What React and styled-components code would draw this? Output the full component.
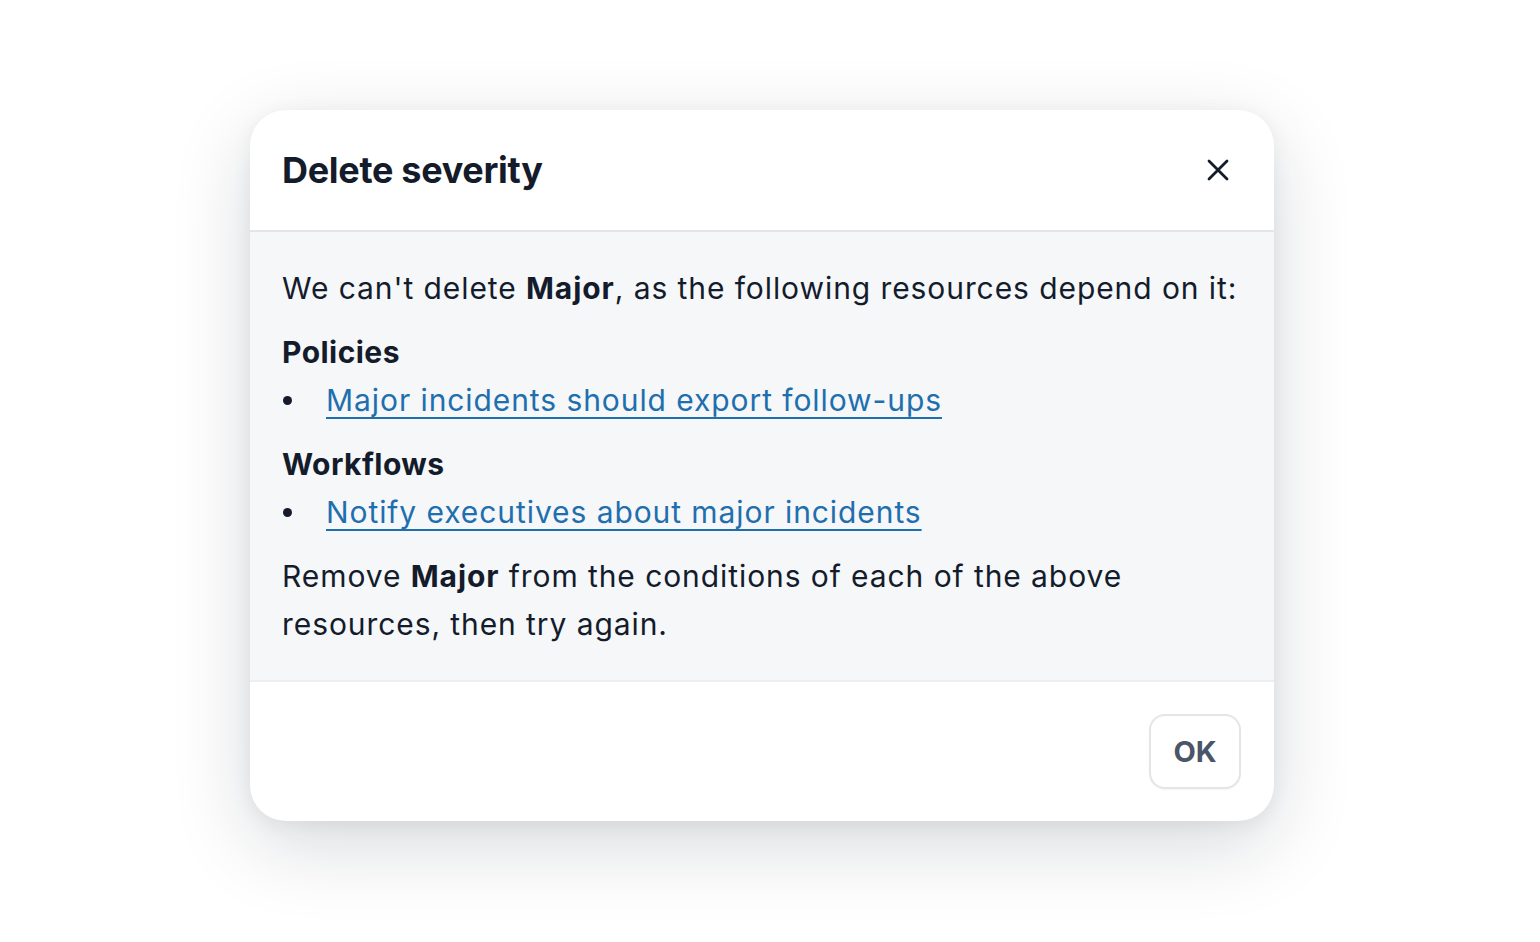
import React from "react";
import styled, { createGlobalStyle } from "styled-components";

const GlobalStyle = createGlobalStyle`
  html, body {
    margin: 0;
    padding: 0;
    background: #ffffff;
    font-family: Inter, "Noto Sans", sans-serif;
    color: #141c2c;
  }
`;

const Page = styled.div`
  width: 1540px;
  height: 942px;
  display: flex;
  justify-content: center;
  align-items: flex-start;
  padding-top: 110px;
  padding-right: 16px;
  box-sizing: border-box;
`;

const Modal = styled.div`
  width: 1024px;
  background: #ffffff;
  border-radius: 36px;
  overflow: hidden;
  box-shadow: 0 24px 80px rgba(15, 23, 42, 0.16), 0 4px 20px rgba(15, 23, 42, 0.06);
`;

const Header = styled.div`
  height: 120px;
  display: flex;
  align-items: center;
  justify-content: space-between;
  padding: 0 36px 0 32px;
  border-bottom: 2px solid #e2e5ea;
`;

const Title = styled.h2`
  margin: 0;
  font-size: 36px;
  font-weight: 700;
  letter-spacing: -0.3px;
  color: #141c2c;
`;

const CloseButton = styled.button`
  border: none;
  background: none;
  padding: 0;
  width: 40px;
  height: 40px;
  display: flex;
  align-items: center;
  justify-content: center;
  cursor: pointer;
  color: #141c2c;
`;

const Body = styled.div`
  background: #f5f7f9;
  padding: 32px 32px 32px;
  font-size: 30px;
  line-height: 48px;
  letter-spacing: 0.92px;
  border-bottom: 2px solid #eceef1;
`;

const Para = styled.p`
  margin: 0;
`;

const Section = styled.div`
  margin-top: 16px;
`;

const SectionTitle = styled.div`
  font-weight: 700;
  letter-spacing: 0.45px;
`;

const List = styled.ul`
  margin: 0;
  padding: 0;
  list-style: none;
`;

const Item = styled.li`
  display: flex;
  align-items: center;
  &::before {
    content: "";
    width: 9px;
    height: 9px;
    border-radius: 50%;
    background: #141c2c;
    margin: 0 34px 0 1px;
    flex-shrink: 0;
  }
`;

const Link = styled.a`
  color: #1f6fae;
  text-decoration: underline;
  text-decoration-thickness: 2px;
  text-underline-offset: 6px;
`;

const Footer = styled.div`
  display: flex;
  justify-content: flex-end;
  padding: 32px 33px 32px;
`;

const OkButton = styled.button`
  width: 92px;
  height: 75px;
  border: 2px solid #e3e5e8;
  border-radius: 16px;
  background: #ffffff;
  font-family: Inter, sans-serif;
  font-size: 29px;
  font-weight: 700;
  color: #4a5568;
  cursor: pointer;
  box-shadow: 0 1px 2px rgba(0, 0, 0, 0.04);
`;

export default function App() {
  return (
    <>
      <GlobalStyle />
      <Page>
        <Modal>
          <Header>
            <Title>Delete severity</Title>
            <CloseButton aria-label="Close">
              <svg width="24" height="24" viewBox="0 0 24 24" fill="none" stroke="currentColor" strokeWidth="2.8" strokeLinecap="round">
                <path d="M3 3L21 21M21 3L3 21" />
              </svg>
            </CloseButton>
          </Header>
          <Body>
            <Para>
              We can't delete <b>Major</b>, as the following resources depend on it:
            </Para>
            <Section>
              <SectionTitle>Policies</SectionTitle>
              <List>
                <Item>
                  <Link href="#">Major incidents should export follow-ups</Link>
                </Item>
              </List>
            </Section>
            <Section>
              <SectionTitle>Workflows</SectionTitle>
              <List>
                <Item>
                  <Link href="#">Notify executives about major incidents</Link>
                </Item>
              </List>
            </Section>
            <Section>
              <Para>
                Remove <b>Major</b> from the conditions of each of the above resources, then try again.
              </Para>
            </Section>
          </Body>
          <Footer>
            <OkButton>OK</OkButton>
          </Footer>
        </Modal>
      </Page>
    </>
  );
}
